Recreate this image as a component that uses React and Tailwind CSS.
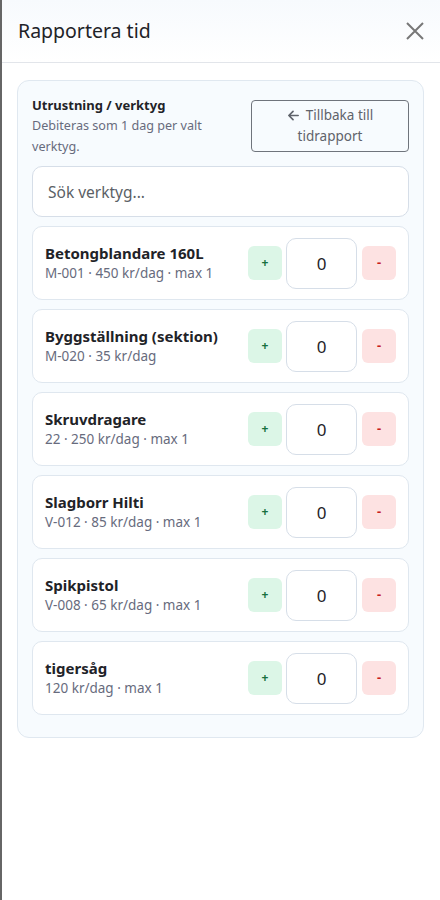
import { useState } from "react";

const tools = [
  { id: "betong", name: "Betongblandare 160L", meta: "M-001 · 450 kr/dag · max 1" },
  { id: "bygg", name: "Byggställning (sektion)", meta: "M-020 · 35 kr/dag" },
  { id: "skruv", name: "Skruvdragare", meta: "22 · 250 kr/dag · max 1" },
  { id: "hilti", name: "Slagborr Hilti", meta: "V-012 · 85 kr/dag · max 1" },
  { id: "spik", name: "Spikpistol", meta: "V-008 · 65 kr/dag · max 1" },
  { id: "tiger", name: "tigersåg", meta: "120 kr/dag · max 1" },
];

function ToolRow({ tool, value, onChange }) {
  return (
    <div className="flex items-center justify-between h-[74px] pl-3 pr-3 bg-white border border-[#dfe7ef] rounded-[10px]">
      <div className="flex flex-col">
        <span className="text-[15px] font-bold text-[#1f2328] leading-[20px]">{tool.name}</span>
        <span className="text-[13.5px] text-[#676b7d] leading-[20px]">{tool.meta}</span>
      </div>
      <div className="flex items-center">
        <button
          onClick={() => onChange(value + 1)}
          className="w-[34px] h-[34px] rounded-[6px] bg-[#dcf6e7] text-[#17703f] text-[12px] font-bold flex items-center justify-center"
        >
          +
        </button>
        <input
          value={value}
          onChange={(e) => onChange(Number(e.target.value) || 0)}
          className="ml-1 w-[71px] h-[51px] rounded-[10px] border border-[#d6dee8] bg-white text-center text-[17px] text-[#1f2328] outline-none"
        />
        <button
          onClick={() => onChange(Math.max(0, value - 1))}
          className="ml-[5px] w-[34px] h-[34px] rounded-[6px] bg-[#fde2e2] text-[#c81e1e] text-[13px] font-bold flex items-center justify-center"
        >
          -
        </button>
      </div>
    </div>
  );
}

export default function App() {
  const [counts, setCounts] = useState({});
  const [search, setSearch] = useState("");

  const setCount = (id, v) => setCounts((c) => ({ ...c, [id]: v }));

  return (
    <div className="min-h-[900px] bg-white border-l-2 border-[#666666] font-['Noto_Sans',sans-serif] text-[#1f2328]">
      {/* Header */}
      <div className="flex items-center justify-between h-[63px] pl-[16px] pr-[14px] border-b border-[#e2e5ea] bg-gradient-to-b from-[#f7fafd] to-white">
        <h1 className="text-[19.5px] leading-none text-[#1f2328]">Rapportera tid</h1>
        <button className="text-[#777777]">
          <svg width="22" height="22" viewBox="0 0 22 22" fill="none" stroke="currentColor" strokeWidth="2">
            <path d="M3 3L19 19M19 3L3 19" />
          </svg>
        </button>
      </div>

      {/* Panel */}
      <div className="mt-[17px] ml-[15px] mr-[16px] pt-[14px] pb-[22px] px-[14px] bg-[#f7fbfe] border border-[#e0e8f0] rounded-[12px]">
        <div className="flex justify-between">
          <div>
            <div className="text-[13px] font-bold leading-[20px]">Utrustning / verktyg</div>
            <div className="text-[12.6px] text-[#676b7d] leading-[21px] w-[200px]">
              Debiteras som 1 dag per valt verktyg.
            </div>
          </div>
          <button className="mt-[5px] w-[158px] h-[52px] border border-[#6f747c] rounded-[4px] bg-transparent text-[13.5px] leading-[21px] text-[#5f636b] flex flex-col items-center justify-center">
            <span className="flex items-center gap-[6px]">
              <svg width="13" height="13" viewBox="0 0 14 14" fill="none" stroke="currentColor" strokeWidth="1.8" strokeLinecap="round" strokeLinejoin="round">
                <path d="M12 7H2M6.5 2.5L2 7L6.5 11.5" />
              </svg>
              Tillbaka till
            </span>
            <span>tidrapport</span>
          </button>
        </div>

        <input
          value={search}
          onChange={(e) => setSearch(e.target.value)}
          placeholder="Sök verktyg..."
          className="mt-[9px] w-full h-[51px] px-[15px] rounded-[10px] border border-[#d6dee8] bg-white text-[15.5px] placeholder:text-[#5b5f66] outline-none"
        />

        <div className="mt-[9px] flex flex-col gap-[9px]">
          {tools
            .filter((t) => t.name.toLowerCase().includes(search.toLowerCase()))
            .map((t) => (
              <ToolRow key={t.id} tool={t} value={counts[t.id] || 0} onChange={(v) => setCount(t.id, v)} />
            ))}
        </div>
      </div>
    </div>
  );
}
